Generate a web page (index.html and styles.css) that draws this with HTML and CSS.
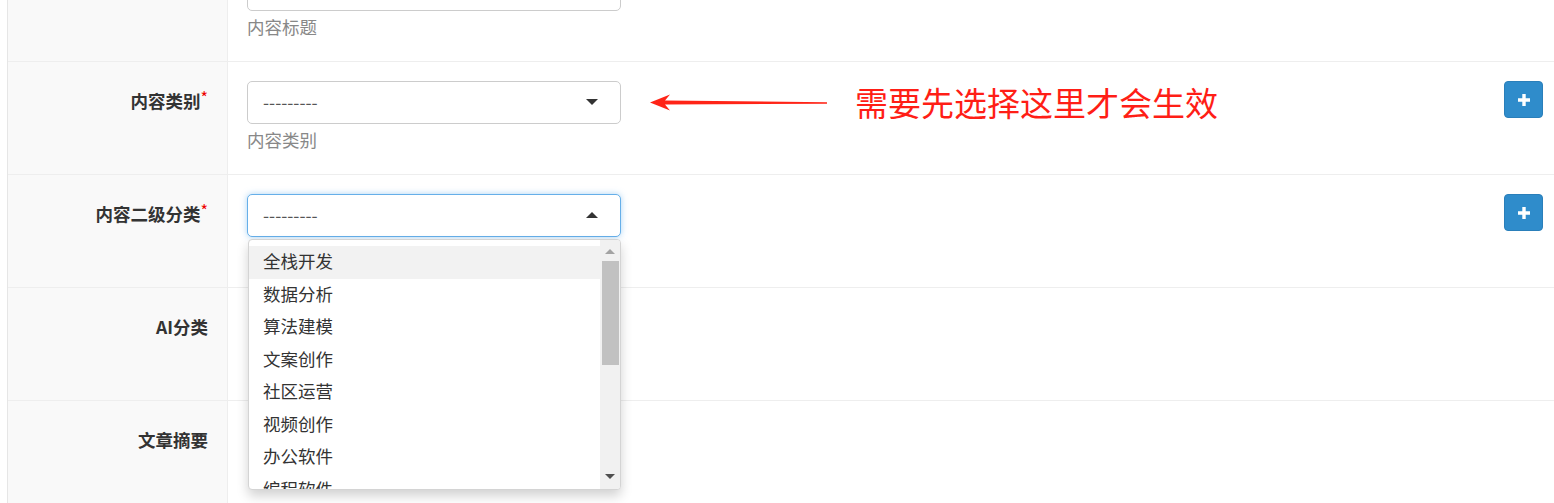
FILE: index.html
```html
<!DOCTYPE html>
<html lang="zh-CN">
<head>
  <meta charset="UTF-8">
  <title>内容编辑</title>
  <link rel="stylesheet" href="styles.css">
</head>
<body>

  <div class="form">

    <!-- 内容标题 -->
    <div class="row">
      <div class="label"></div>
      <div class="cell">
        <div class="field">
          <div class="input"></div>
          <div class="help">内容标题</div>
        </div>
      </div>
    </div>

    <!-- 内容类别 -->
    <div class="row">
      <div class="label">内容类别<span class="req">*</span></div>
      <div class="cell">
        <div class="field">
          <div class="select"><span>---------</span><i class="caret"></i></div>
          <div class="help">内容类别</div>
        </div>
        <div class="note">
          <svg class="arrow" width="178" height="18" viewBox="0 0 178 18">
            <polygon points="0,8.5 20,0.5 15,6.6 177,8.2 177,9.8 15,10.6 20,16.5" fill="#ff2417"/>
          </svg>
          <span>需要先选择这里才会生效</span>
        </div>
        <button class="add"><svg width="12" height="12" viewBox="0 0 12 12"><path d="M4.3 0h3.4v4.3H12v3.4H7.7V12H4.3V7.7H0V4.3h4.3z" fill="#fff"/></svg></button>
      </div>
    </div>

    <!-- 内容二级分类 -->
    <div class="row">
      <div class="label">内容二级分类<span class="req">*</span></div>
      <div class="cell">
        <div class="field">
          <div class="select focus"><span>---------</span><i class="caret up"></i></div>
          <div class="menu">
            <ul class="options">
              <li class="active">全栈开发</li>
              <li>数据分析</li>
              <li>算法建模</li>
              <li>文案创作</li>
              <li>社区运营</li>
              <li>视频创作</li>
              <li>办公软件</li>
              <li>编程软件</li>
              <li>设计素材</li>
            </ul>
            <div class="scrollbar">
              <i class="sb-up"></i>
              <div class="sb-thumb"></div>
              <i class="sb-down"></i>
            </div>
          </div>
        </div>
        <button class="add"><svg width="12" height="12" viewBox="0 0 12 12"><path d="M4.3 0h3.4v4.3H12v3.4H7.7V12H4.3V7.7H0V4.3h4.3z" fill="#fff"/></svg></button>
      </div>
    </div>

    <!-- AI分类 -->
    <div class="row">
      <div class="label">AI分类</div>
      <div class="cell"></div>
    </div>

    <!-- 文章摘要 -->
    <div class="row">
      <div class="label">文章摘要</div>
      <div class="cell"></div>
    </div>

  </div>

</body>
</html>
```

FILE: styles.css
```css
html, body {
  height: 503px;
  overflow: hidden;
}

body {
  margin: 0;
  background: #fff;
  color: #333;
  font-family: "Noto Sans CJK SC", "Microsoft YaHei", sans-serif;
  font-size: 17.5px;
}

.form {
  margin: -51px 0 0 7px;
  border-left: 1px solid #e6e6e6;
}

.row {
  display: grid;
  grid-template-columns: 220px 1fr;
  min-height: 112px;
  border-bottom: 1px solid #eee;
}

.label {
  box-sizing: border-box;
  background: #f9f9f9;
  border-right: 1px solid #eee;
  text-align: right;
  padding: 26px 19px 0 0;
  font-weight: bold;
  line-height: 25px;
  color: #333;
}

.req {
  color: #e00;
  font-weight: normal;
  font-size: 16px;
  vertical-align: top;
  line-height: 18px;
}

.cell {
  display: flex;
  align-items: flex-start;
  padding: 19px 11px 0 19px;
}

.field {
  position: relative;
  width: 374px;
}

.input,
.select {
  box-sizing: border-box;
  height: 43px;
  border: 1px solid #ccc;
  border-radius: 5px;
  background: #fff;
}

.select {
  display: flex;
  align-items: center;
  padding: 0 22px 2px 15px;
  color: #555;
}

.select.focus {
  border-color: #66afe9;
  box-shadow: 0 0 6px rgba(102, 175, 233, 0.55);
}

.caret {
  margin-left: auto;
  width: 0;
  height: 0;
  border-left: 6px solid transparent;
  border-right: 6px solid transparent;
  border-top: 6px solid #333;
}

.caret.up {
  border-top: none;
  border-bottom: 6px solid #333;
}

.help {
  margin-top: 3px;
  line-height: 25px;
  color: #888;
}

/* annotation */
.note {
  display: flex;
  align-items: center;
  height: 43px;
  margin-left: 29px;
}

.note span {
  margin-left: 27px;
  font-size: 33px;
  line-height: 43px;
  color: #ff1e16;
}

.add {
  margin-left: auto;
  width: 39px;
  height: 37px;
  padding: 0;
  border: 1px solid #2a7fba;
  border-radius: 4px;
  background: #2f8ccb;
  display: flex;
  align-items: center;
  justify-content: center;
  cursor: pointer;
}

/* open dropdown */
.menu {
  position: absolute;
  top: 45px;
  left: 1px;
  z-index: 10;
  box-sizing: border-box;
  width: 373px;
  height: 251px;
  display: flex;
  background: #fff;
  border: 1px solid #d4d4d4;
  border-radius: 4px;
  box-shadow: 0 6px 12px rgba(0, 0, 0, 0.18);
  overflow: hidden;
}

.options {
  flex: 1;
  margin: 0;
  padding: 6px 0 0;
  list-style: none;
}

.options li {
  box-sizing: border-box;
  height: 32.5px;
  line-height: 30.5px;
  padding-left: 14px;
  color: #333;
}

.options li.active {
  background: #f2f2f2;
}

.scrollbar {
  width: 20px;
  background: #f1f1f1;
  display: flex;
  flex-direction: column;
  align-items: center;
}

.sb-up,
.sb-down {
  width: 0;
  height: 0;
  border-left: 5px solid transparent;
  border-right: 5px solid transparent;
}

.sb-up {
  margin-top: 9px;
  border-bottom: 5px solid #a3a3a3;
}

.sb-thumb {
  margin-top: 7px;
  width: 17px;
  height: 104px;
  background: #c1c1c1;
}

.sb-down {
  margin-top: auto;
  margin-bottom: 10px;
  border-top: 5px solid #505050;
}
```
